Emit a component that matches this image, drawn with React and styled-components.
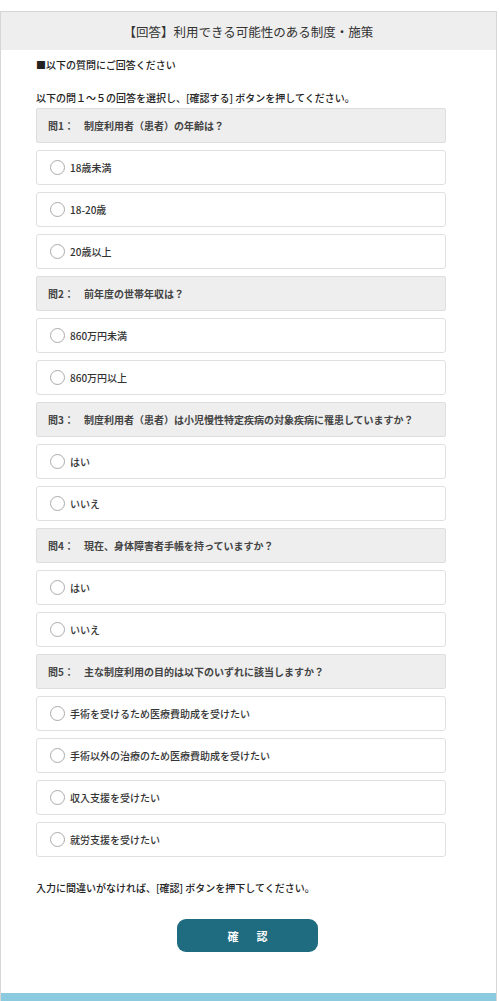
import React from 'react';
import styled, { createGlobalStyle } from 'styled-components';

const GlobalStyle = createGlobalStyle`
  body {
    margin: 0;
    background: #fff;
    font-family: "Noto Sans CJK JP", "Noto Sans", sans-serif;
    color: #333;
  }
`

const Page = styled.div`
  width: 499px;
  height: 1001px;
  padding-top: 11px;
  box-sizing: border-box;
`

const Panel = styled.div`
  width: 497px;
  height: 990px;
  box-sizing: border-box;
  border: 1px solid #d6d6d6;
  border-bottom: none;
  display: flex;
  flex-direction: column;
`

const Title = styled.h1`
  margin: 0;
  height: 38px;
  background: #eeeeee;
  display: flex;
  align-items: center;
  justify-content: center;
  font-size: 12.5px;
  font-weight: 400;
  color: #333;
`

const Body = styled.div`
  flex: 1;
  padding: 0 50px 0 35px;
`

const Lead = styled.p`
  margin: 0;
  height: ${(p) => p.h}px;
  padding-top: ${(p) => p.pt || 0}px;
  box-sizing: border-box;
  display: flex;
  align-items: center;
  font-size: 10px;
  font-weight: 500;
  color: #222;
`

const List = styled.div`
  display: flex;
  flex-direction: column;
  gap: 7px;
`

const Question = styled.div`
  height: 35px;
  box-sizing: border-box;
  background: #eeeeee;
  border: 1px solid #dedede;
  border-radius: 2px;
  display: flex;
  align-items: center;
  padding-left: 11px;
  font-size: 10px;
  font-weight: 700;
  color: #444;
`

const Option = styled.label`
  height: 35px;
  box-sizing: border-box;
  background: #fff;
  border: 1px solid #e0e0e0;
  border-radius: 3px;
  display: flex;
  align-items: center;
  gap: 5px;
  padding-left: 13px;
  font-size: 10px;
  font-weight: 500;
  color: #333;
`

const Radio = styled.span`
  width: 15px;
  height: 15px;
  box-sizing: border-box;
  border: 1.5px solid #aaa;
  border-radius: 50%;
  background: #fff;
`

const Actions = styled.div`
  display: flex;
  justify-content: center;
  padding-top: 2px;
  margin-left: -35px;
  margin-right: -50px;
`

const Button = styled.button`
  width: 141px;
  height: 33px;
  margin-left: -2px;
  border: none;
  border-radius: 9px;
  background: #1f6b80;
  color: #fff;
  font-family: inherit;
  font-size: 11px;
  font-weight: 700;
  letter-spacing: 18px;
  text-indent: 18px;
`

const Footer = styled.div`
  height: 8px;
  background: #8ccae0;
`

const questions = [
  { q: '問1：　制度利用者（患者）の年齢は？', opts: ['18歳未満', '18-20歳', '20歳以上'] },
  { q: '問2：　前年度の世帯年収は？', opts: ['860万円未満', '860万円以上'] },
  { q: '問3：　制度利用者（患者）は小児慢性特定疾病の対象疾病に罹患していますか？', opts: ['はい', 'いいえ'] },
  { q: '問4：　現在、身体障害者手帳を持っていますか？', opts: ['はい', 'いいえ'] },
  {
    q: '問5：　主な制度利用の目的は以下のいずれに該当しますか？',
    opts: ['手術を受けるため医療費助成を受けたい', '手術以外の治療のため医療費助成を受けたい', '収入支援を受けたい', '就労支援を受けたい'],
  },
]

const App = () => {
  return (
    <Page>
      <GlobalStyle />
      <Panel>
        <Title>【回答】利用できる可能性のある制度・施策</Title>
        <Body>
          <Lead h={28}>■以下の質問にご回答ください</Lead>
          <Lead h={30} pt={8}>以下の問１～５の回答を選択し、[確認する] ボタンを押してください。</Lead>
          <List>
            {questions.map((item) => (
              <React.Fragment key={item.q}>
                <Question>{item.q}</Question>
                {item.opts.map((o) => (
                  <Option key={item.q + o}>
                    <Radio />
                    {o}
                  </Option>
                ))}
              </React.Fragment>
            ))}
          </List>
          <Lead h={60}>入力に間違いがなければ、[確認] ボタンを押下してください。</Lead>
          <Actions>
            <Button>確認</Button>
          </Actions>
        </Body>
        <Footer />
      </Panel>
    </Page>
  )
}

export default App
